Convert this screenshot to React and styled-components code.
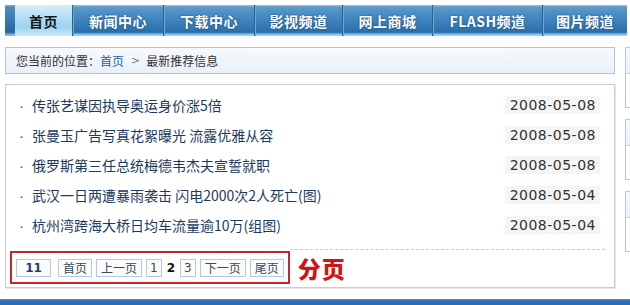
import React from "react";
import styled, { createGlobalStyle } from "styled-components";

const Global = createGlobalStyle`
  html, body { margin: 0; padding: 0; background: #ffffff; }
  body {
    width: 630px;
    height: 305px;
    overflow: hidden;
    font-family: "Noto Sans CJK SC", "DejaVu Sans", sans-serif;
  }
`;

const Page = styled.div`
  width: 630px;
  height: 305px;
  display: flex;
  flex-direction: column;
  overflow: hidden;
`;

const Nav = styled.nav`
  margin: 5px 0 0 5px;
  height: 32px;
  width: 622px;
  display: flex;
  padding-left: 10px;
  box-sizing: border-box;
  background: linear-gradient(
    #a9cce4 0%,
    #5d9bcb 6%,
    #4a8dc4 30%,
    #3a80bc 55%,
    #2a6ea9 88%,
    #7cbde6 94%,
    #b6ddf3 100%
  );
  box-shadow: inset 10px 0 0 rgba(20, 60, 100, 0.15);
`;

const Tab = styled.a`
  flex: 0 0 ${(p) => p.$w}px;
  display: flex;
  align-items: center;
  justify-content: center;
  font-size: 14px;
  font-weight: 700;
  letter-spacing: 0.5px;
  color: ${(p) => (p.$active ? "#141414" : "#ffffff")};
  text-shadow: ${(p) => (p.$active ? "none" : "0 0 2px rgba(10,40,80,0.7)")};
  background: ${(p) =>
    p.$active
      ? "linear-gradient(#d7eefa 0%, #b4def5 40%, #9ed3f0 70%, #c6eafb 100%)"
      : "transparent"};
  border-right: ${(p) => (p.$last ? "none" : "1px solid #2a628f")};
  box-shadow: ${(p) => (p.$last ? "none" : "1px 0 0 #6fa8d2")};
  box-sizing: border-box;
`;

const Body = styled.div`
  display: flex;
  margin-top: 11px;
  padding-left: 5px;
`;

const MainCol = styled.div`
  width: 610px;
  flex: 0 0 610px;
  display: flex;
  flex-direction: column;
  gap: 10px;
`;

const Crumb = styled.div`
  height: 27px;
  box-sizing: border-box;
  border: 1px solid #b3c5d4;
  background: linear-gradient(#f7fafd, #e8f0f8);
  display: flex;
  align-items: center;
  padding-left: 10px;
  font-size: 12px;
  color: #333;
`;

const CrumbLink = styled.span`
  color: #24649a;
`;

const CrumbSep = styled.span`
  color: #777;
  margin: 0 6px 0 7px;
  font-family: "DejaVu Sans", sans-serif;
  font-size: 11px;
`;

const ContentBox = styled.div`
  height: 204px;
  box-sizing: border-box;
  border: 1px solid #c3d0da;
  box-shadow: 1px 1px 0 #e6e6e6;
  padding: 5px 9px 0 4px;
  display: flex;
  flex-direction: column;
`;

const List = styled.ul`
  list-style: none;
  margin: 0;
  padding: 0;
`;

const Row = styled.li`
  height: 30px;
  display: flex;
  align-items: center;
  padding: 0 5px 0 9px;
  font-size: 14px;
`;

const Bullet = styled.span`
  flex: 0 0 13px;
  font-family: "Liberation Sans", sans-serif;
  font-size: 15px;
  color: #555;
`;

const Title = styled.a`
  flex: 1;
  color: #1d3a5c;
  white-space: nowrap;
`;

const DateText = styled.span`
  font-family: "DejaVu Sans", sans-serif;
  font-size: 14px;
  letter-spacing: 0.5px;
  color: #333;
  background: #f5f5f5;
  padding: 0 4px 0 5px;
  line-height: 18px;
`;

const PagerRow = styled.div`
  display: flex;
  margin-top: 9px;
`;

const PagerFrame = styled.div`
  margin-top: 2px;
  height: 33px;
  box-sizing: border-box;
  border: 2px solid #c0282b;
  display: flex;
  align-items: center;
  gap: 4px;
  padding: 0 4px;
`;

const PageBox = styled.span`
  height: 18px;
  box-sizing: border-box;
  min-width: ${(p) => p.$min || 0}px;
  border: 1px solid #b6c9d6;
  background: #f9fbfc;
  display: flex;
  align-items: center;
  justify-content: center;
  padding: 0 ${(p) => (p.$narrow ? 3 : 4)}px;
  font-size: 12px;
  color: ${(p) => (p.$strong ? "#1f3f6f" : "#3a4a5a")};
  font-weight: ${(p) => (p.$strong ? 700 : 400)};
  font-family: ${(p) =>
    p.$num ? '"DejaVu Sans", sans-serif' : '"Noto Sans CJK SC", sans-serif'};
  margin-right: ${(p) => p.$after || 0}px;
`;

const Current = styled.span`
  font-family: "DejaVu Sans", sans-serif;
  font-size: 12px;
  font-weight: 700;
  color: #111;
  padding: 0 1px;
`;

const PagerRest = styled.div`
  flex: 1;
  border-top: 1px dashed #c8c8c8;
  display: flex;
  align-items: center;
  height: 35px;
`;

const Label = styled.span`
  margin-left: 8px;
  font-size: 23px;
  font-weight: 900;
  color: #cc1616;
  letter-spacing: 1px;
`;

const SideCol = styled.div`
  margin-left: 10px;
  display: flex;
  flex-direction: column;
  gap: 11px;
`;

const SideBox = styled.div`
  width: 120px;
  height: 61px;
  box-sizing: border-box;
  border: 1px solid #b8c8d6;
  display: flex;
  flex-direction: column;
`;

const SideHead = styled.div`
  height: 25px;
  border-bottom: 1px solid #c8d6e2;
  background: linear-gradient(#f5f9fd, #e7eff8);
`;

const Footer = styled.div`
  margin-top: 11px;
  height: 6px;
  background: linear-gradient(#5b97d0 0%, #2c70b8 30%, #2a6cb3 100%);
`;

const tabs = [
  { t: "首页", w: 58, active: true },
  { t: "新闻中心", w: 91 },
  { t: "下载中心", w: 91 },
  { t: "影视频道", w: 88 },
  { t: "网上商城", w: 90 },
  { t: "FLASH频道", w: 110 },
  { t: "图片频道", w: 84, last: true },
];

const news = [
  ["传张艺谋因执导奥运身价涨5倍", "2008-05-08"],
  ["张曼玉广告写真花絮曝光 流露优雅从容", "2008-05-08"],
  ["俄罗斯第三任总统梅德韦杰夫宣誓就职", "2008-05-08"],
  ["武汉一日两遭暴雨袭击 闪电2000次2人死亡(图)", "2008-05-04"],
  ["杭州湾跨海大桥日均车流量逾10万(组图)", "2008-05-04"],
];

export default function App() {
  return (
    <Page>
      <Global />
      <Nav>
        {tabs.map((tab) => (
          <Tab key={tab.t} $w={tab.w} $active={tab.active} $last={tab.last}>
            {tab.t}
          </Tab>
        ))}
      </Nav>
      <Body>
        <MainCol>
          <Crumb>
            您当前的位置：<CrumbLink>首页</CrumbLink>
            <CrumbSep>&gt;</CrumbSep>最新推荐信息
          </Crumb>
          <ContentBox>
            <List>
              {news.map(([title, date]) => (
                <Row key={title}>
                  <Bullet>·</Bullet>
                  <Title>{title}</Title>
                  <DateText>{date}</DateText>
                </Row>
              ))}
            </List>
            <PagerRow>
              <PagerFrame>
                <PageBox $min={35} $strong $num $after={3}>
                  11
                </PageBox>
                <PageBox>首页</PageBox>
                <PageBox>上一页</PageBox>
                <PageBox $narrow $num>
                  1
                </PageBox>
                <Current>2</Current>
                <PageBox $narrow $num>
                  3
                </PageBox>
                <PageBox>下一页</PageBox>
                <PageBox>尾页</PageBox>
              </PagerFrame>
              <PagerRest>
                <Label>分页</Label>
              </PagerRest>
            </PagerRow>
          </ContentBox>
        </MainCol>
        <SideCol>
          <SideBox>
            <SideHead />
          </SideBox>
          <SideBox>
            <SideHead />
          </SideBox>
          <SideBox>
            <SideHead />
          </SideBox>
        </SideCol>
      </Body>
      <Footer />
    </Page>
  );
}
